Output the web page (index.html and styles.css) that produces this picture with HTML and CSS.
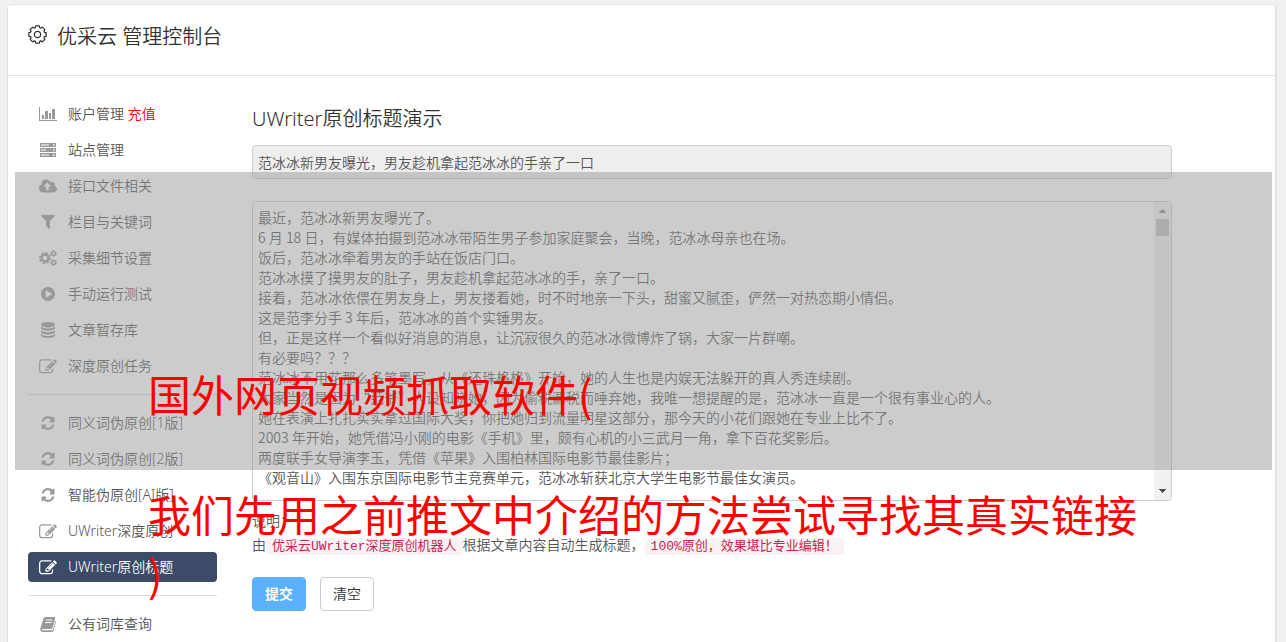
FILE: index.html
```html
<!DOCTYPE html>
<html lang="zh-CN">
<head>
<meta charset="utf-8">
<title>优采云 管理控制台</title>
<link rel="stylesheet" href="styles.css">
</head>
<body>
<svg class="defs" aria-hidden="true">
  <symbol id="gear" viewBox="-9 -9 18 18"><path d="M6.600 2.100Q5.600 3 7 4.600L4.600 7Q3 5.600 2.100 6.600L1.700 8.200H-1.700L-2.100 6.600Q-3 5.600-4.600 7L-7 4.600Q-5.600 3-6.600 2.100L-8.200 1.700V-1.700L-6.600-2.100Q-5.600-3-7-4.600L-4.600-7Q-3-5.600-2.100-6.600L-1.700-8.200H1.700L2.100-6.600Q3-5.600 4.600-7L7-4.600Q5.600-3 6.600-2.100L8.200-1.700V1.700Z"/><circle r="3"/></symbol>
  <symbol id="chart" viewBox="0 0 18 16"><path d="M0 1h1v13h17v1H0zM3 9h2v4H3zM6 5h3v8H6zM10 7h2v6h-2zM13 3h3v10h-3z"/></symbol>
  <symbol id="server" viewBox="0 0 18 16"><path fill-rule="evenodd" d="M1 1h16v4H1zM2 2.500v1h8v-1zM14 2.300v1.400h1.500V2.300zM1 6h16v4H1zM2 7.500v1h5v-1zM14 7.300v1.400h1.500V7.300zM1 11h16v4H1zM2 12.500v1h8v-1zM14 12.300v1.400h1.500v-1.400z"/></symbol>
  <symbol id="cloud" viewBox="0 0 1920 1408"><path d="M1280 736q0-14-9-23L919 361q-9-9-23-9t-23 9L522 712q-10 12-10 24 0 14 9 23t23 9h224v352q0 13 9.500 22.500t22.500 9.500h192q13 0 22.500-9.500t9.500-22.500V768h224q13 0 22.500-9.500t9.500-22.500zm640 288q0 159-112.500 271.500T1536 1408H448q-185 0-316.500-131.500T0 960q0-130 70-240t188-165q-2-30-2-43 0-212 150-362T768 0q156 0 285.500 87T1242 318q71-62 166-62 106 0 181 75t75 181q0 76-41 138 130 31 213.500 135.500T1920 1024z"/></symbol>
  <symbol id="filter" viewBox="-100 0 1608 1408"><path d="M1403 39q17 41-14 70L896 602v742q0 42-39 59-13 5-25 5-27 0-45-19l-256-256q-19-19-19-45V602L19 109Q-12 80 5 39 22 0 64 0h1280q42 0 59 39z"/></symbol>
  <symbol id="cogs" viewBox="0 0 18 16"><g fill="none" stroke="currentColor"><circle cx="6" cy="8" r="3.500" stroke-width="2.400"/><circle cx="6" cy="8" r="5.300" stroke-width="1.600" stroke-dasharray="2.080 2.080"/><circle cx="14.500" cy="3.500" r="1.900" stroke-width="1.400"/><circle cx="14.500" cy="3.500" r="2.900" stroke-width="1" stroke-dasharray="1.140 1.140"/><circle cx="14.500" cy="12.500" r="1.900" stroke-width="1.400"/><circle cx="14.500" cy="12.500" r="2.900" stroke-width="1" stroke-dasharray="1.140 1.140"/></g></symbol>
  <symbol id="play" viewBox="0 0 1536 1536"><path d="M768 0q209 0 385.500 103T1433 382.500 1536 768t-103 385.500-279.500 279.500T768 1536t-385.500-103T103 1153.500 0 768t103-385.500T382.500 103 768 0zm384 823q32-18 32-55t-32-55L608 393q-31-19-64-1-32 19-32 56v640q0 37 32 56 16 8 32 8 17 0 32-9z"/></symbol>
  <symbol id="database" viewBox="0 0 16 16"><ellipse cx="8" cy="2.700" rx="7" ry="2.700"/><path d="M1 4.500q2 1.900 7 1.900t7-1.900v2q-1 2.200-7 2.200T1 6.500zM1 8.300q2 1.900 7 1.900t7-1.900v2q-1 2.200-7 2.200t-7-2.200zM1 12q2 1.900 7 1.900t7-1.900v1.800Q14 16 8 16t-7-2.200z"/></symbol>
  <symbol id="edit" viewBox="0 0 1792 1600"><path d="M888 1184l116-116-152-152-116 116v56h96v96h56zm440-720q-16-16-33 1L945 815q-17 17-1 33t33-1l350-350q17-17 1-33zm80 594v190q0 119-84.500 203.500T1120 1536H288q-119 0-203.500-84.500T0 1248V416q0-119 84.500-203.500T288 128h832q63 0 117 25 15 7 18 23 3 17-9 29l-49 49q-14 14-32 8-23-6-45-6H288q-66 0-113 47t-47 113v832q0 66 47 113t113 47h832q66 0 113-47t47-113v-126q0-13 9-22l64-64q15-15 35-7t20 29zm-96-738l288 288-672 672H640V992zm444 132l-92 92-288-288 92-92q28-28 68-28t68 28l152 152q28 28 28 68t-28 68z"/></symbol>
  <symbol id="refresh" viewBox="0 0 1536 1664"><path d="M1511 1056q0 5-1 7-64 268-268 434.500T764 1664q-146 0-282.500-55T238 1452l-129 129q-19 19-45 19t-45-19-19-45v-448q0-26 19-45t45-19h448q26 0 45 19t19 45-19 45l-137 137q71 66 161 102t187 36q134 0 250-65t186-179q11-17 53-117 8-23 30-23h192q13 0 22.500 9.500t9.500 22.500zm25-800v448q0 26-19 45t-45 19h-448q-26 0-45-19t-19-45 19-45l138-138Q969 256 768 256q-134 0-250 65T332 500q-11 17-53 117-8 23-30 23H50q-13 0-22.500-9.500T18 608v-7q65-268 270-434.500T768 0q146 0 284 55.500T1297 212l130-129q19-19 45-19t45 19 19 45z"/></symbol>
  <symbol id="book" viewBox="0 0 18 16"><path fill-rule="evenodd" d="M6.500 1H15q1.500.2 1.100 1.800L13.500 12q-.4 1-1.500 1H4q-1.300 0-1 .8.100.5 1 .5h9q.7 0 1-.8l2.600-9q.7.500.4 1.500l-2.500 8.500q-.4 1.500-2 1.500H4q-2-.1-2.600-2-.2-.8 0-1.600L4.500 2.500Q5 1 6.500 1zM7 3.500L6.700 4.500h6.500l.3-1zM6.300 6L6 7h6.500l.3-1z"/></symbol>
</svg>

<div class="panel">
  <header class="panel-head">
    <svg class="head-icon" aria-hidden="true"><use href="#gear"/></svg>
    <h1 class="title">优采云 管理控制台</h1>
  </header>
  <div class="panel-body">
    <nav class="side">
      <a class="item" href="#"><svg class="icon"><use href="#chart"/></svg><span>账户管理 <span class="red">充值</span></span></a>
      <a class="item" href="#"><svg class="icon"><use href="#server"/></svg>站点管理</a>
      <a class="item" href="#"><svg class="icon"><use href="#cloud"/></svg>接口文件相关</a>
      <a class="item" href="#"><svg class="icon small"><use href="#filter"/></svg>栏目与关键词</a>
      <a class="item" href="#"><svg class="icon"><use href="#cogs"/></svg>采集细节设置</a>
      <a class="item" href="#"><svg class="icon small"><use href="#play"/></svg>手动运行测试</a>
      <a class="item" href="#"><svg class="icon"><use href="#database"/></svg>文章暂存库</a>
      <a class="item" href="#"><svg class="icon"><use href="#edit"/></svg>深度原创任务</a>
      <hr class="rule">
      <a class="item" href="#"><svg class="icon small"><use href="#refresh"/></svg>同义词伪原创[1版]</a>
      <a class="item" href="#"><svg class="icon small"><use href="#refresh"/></svg>同义词伪原创[2版]</a>
      <a class="item" href="#"><svg class="icon small"><use href="#refresh"/></svg>智能伪原创[AI版]</a>
      <a class="item" href="#"><svg class="icon"><use href="#edit"/></svg>UWriter深度原创</a>
      <a class="item active" href="#"><svg class="icon"><use href="#edit"/></svg>UWriter原创标题</a>
      <hr class="rule">
      <a class="item" href="#"><svg class="icon"><use href="#book"/></svg>公有词库查询</a>
    </nav>
    <main class="content">
      <h2 class="heading">UWriter原创标题演示</h2>
      <input class="field" type="text" aria-label="标题" readonly value="范冰冰新男友曝光，男友趁机拿起范冰冰的手亲了一口">
      <div class="editor">
        <textarea class="article" aria-label="文章内容" wrap="off">最近，范冰冰新男友曝光了。
6 月 18 日，有媒体拍摄到范冰冰带陌生男子参加家庭聚会，当晚，范冰冰母亲也在场。
饭后，范冰冰牵着男友的手站在饭店门口。
范冰冰摸了摸男友的肚子，男友趁机拿起范冰冰的手，亲了一口。
接着，范冰冰依偎在男友身上，男友搂着她，时不时地亲一下头，甜蜜又腻歪，俨然一对热恋期小情侣。
这是范李分手 3 年后，范冰冰的首个实锤男友。
但，正是这样一个看似好消息的消息，让沉寂很久的范冰冰微博炸了锅，大家一片群嘲。
有必要吗？？？
范冰冰不用花那么多笔墨写，从《还珠格格》开始，她的人生也是内娱无法躲开的真人秀连续剧。
大家当然是因为“范爷”人设知晓她，因为偷税漏税而唾弃她，我唯一想提醒的是，范冰冰一直是一个很有事业心的人。
她在表演上扎扎实实拿过国际大奖，你把她归到流量明星这部分，那今天的小花们跟她在专业上比不了。
2003 年开始，她凭借冯小刚的电影《手机》里，颇有心机的小三武月一角，拿下百花奖影后。
两度联手女导演李玉，凭借《苹果》入围柏林国际电影节最佳影片；
《观音山》入围东京国际电影节主竞赛单元，范冰冰斩获北京大学生电影节最佳女演员。</textarea>
        <div class="scroll" aria-hidden="true">
          <svg class="arrow" viewBox="0 0 17 17"><path fill="#888" d="M5 11h7v-1h-1V9h-1V8H9V7H8v1H7v1H6v1H5z"/></svg>
          <div class="thumb"></div>
          <svg class="arrow" viewBox="0 0 17 17"><path fill="#505050" d="M5 6h7v1h-1v1h-1v1H9v1H8V9H7V8H6V7H5z"/></svg>
        </div>
      </div>
      <p class="note">说明：<br>由<code class="tag">优采云UWriter深度原创机器人</code>根据文章内容自动生成标题，<code class="tag">100%原创，效果堪比专业编辑！</code></p>
      <div class="actions">
        <button class="btn primary" type="submit">提交</button>
        <button class="btn" type="reset">清空</button>
      </div>
    </main>
  </div>
</div>

<div class="banner">国外网页视频抓取软件(<br><br>我们先用之前推文中介绍的方法尝试寻找其真实链接<br>)</div>
</body>
</html>
```
FILE: styles.css
```css
* { box-sizing: border-box; }
body {
  margin: 0;
  padding: 4px 9px 0 7px;
  position: relative;
  min-height: 100vh;
  background: #f1f1f1;
  color: #555;
  font: 350 14px/20px "Noto Sans", "Noto Sans CJK SC", sans-serif;
}
.defs { position: absolute; width: 0; height: 0; }
.panel {
  min-height: calc(100vh - 4px);
  background: #fff;
  border: 1px solid #e3e3e3;
  border-right-width: 2px;
  border-bottom: 0;
  border-radius: 4px 4px 0 0;
}
.panel-head {
  display: flex;
  align-items: flex-start;
  gap: 10px;
  padding: 17px 20px 24px;
  border-bottom: 1px solid #e3e3e3;
}
.head-icon {
  width: 19px;
  height: 19px;
  margin-top: 3px;
  fill: none;
  stroke: #333;
  stroke-width: 1.2;
  stroke-linejoin: round;
}
.title, .heading { margin: 0; color: #333; font-size: 20px; line-height: 29px; font-weight: 350; }
.panel-body {
  display: grid;
  grid-template-columns: 189px 1fr;
  gap: 35px;
  align-items: start;
  padding: 23px 103px 0 20px;
}
.side { display: flex; flex-direction: column; gap: 6px; }
.item {
  display: flex;
  align-items: center;
  gap: 10px;
  height: 30px;
  padding-left: 10px;
  border-radius: 4px;
  color: #555;
  text-decoration: none;
  white-space: nowrap;
}
.icon { flex: none; width: 20px; height: 16px; padding: 0 1px; fill: #999; color: #999; }
.icon.small { height: 14px; }
.red { color: #f00; }
.active { background: #3b4b68; color: #fff; }
.active .icon { fill: #fff; }
.rule { width: 100%; height: 1px; margin: 7px 0; border: 0; background: #ddd; }
.content { min-width: 0; padding-top: 5px; }
.heading { margin-bottom: 12px; }
.field {
  display: block;
  width: 100%;
  height: 34px;
  padding: 0 5px;
  border: 1px solid #ccc;
  border-radius: 4px;
  background: #eee;
  color: #555;
  font: inherit;
}
.editor {
  display: flex;
  height: 300px;
  margin: 22px 0 8px;
  overflow: hidden;
  border: 1px solid #ccc;
  border-radius: 4px;
}
.article {
  flex: 1;
  min-width: 0;
  padding: 5px;
  border: 0;
  outline: 0;
  resize: none;
  overflow: hidden;
  background: #fff;
  color: #555;
  font: 350 14px/20px "Noto Sans CJK SC", sans-serif;
}
.scroll { display: flex; flex-direction: column; width: 17px; background: #f1f1f1; }
.arrow { display: block; width: 17px; height: 17px; }
.thumb { height: 17px; margin: 0 2px auto; background: #c1c1c1; }
.note { margin: 0; line-height: 24px; }
.tag {
  padding: 1px 6px;
  border-radius: 4px;
  background: #f9f2f4;
  color: #c7254e;
  font: 400 13px/16px "Liberation Mono", "Noto Sans CJK SC", monospace;
}
.actions { display: flex; gap: 14px; margin-top: 20px; }
.btn {
  height: 34px;
  padding: 0 12px;
  border: 1px solid #ccc;
  border-radius: 4px;
  background: #fff;
  color: #333;
  font: inherit;
}
.primary { padding: 0 11px; width: 54px; border-color: #5bb0ff; background: #5bb0ff; color: #fff; font-weight: 700; }
.banner {
  position: absolute;
  top: 172px;
  left: 15px;
  right: 14px;
  height: 298px;
  padding: 191px 0 0 133px;
  background: rgba(153, 153, 153, .5);
  color: #f00;
  font: 400 43px/60px "Noto Sans CJK SC", sans-serif;
  white-space: nowrap;
  pointer-events: none;
}
```
